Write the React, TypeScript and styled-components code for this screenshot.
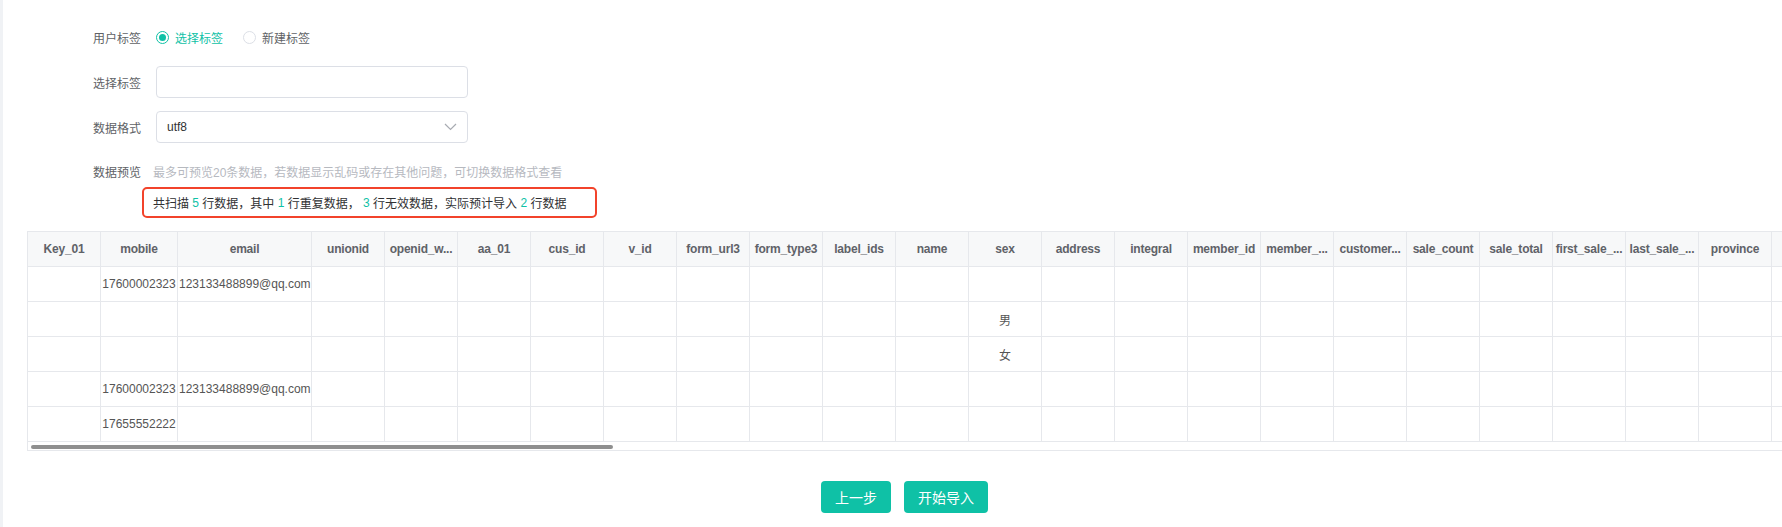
import React from 'react';
import styled, { createGlobalStyle } from 'styled-components';

const teal = '#0fc1a6';
const lineGrey = '#e6e8ec';
const textGrey = '#606266';

const GlobalStyle = createGlobalStyle`
  html, body {
    margin: 0;
    padding: 0;
    background: #fff;
  }
  body {
    font-family: "Liberation Sans", "Noto Sans CJK SC", sans-serif;
    font-size: 12px;
    color: ${textGrey};
  }
`;

// titles are shown already shortened, as the table header displays them
const columns: { key: string; title: string; width: number }[] = [
  { key: 'Key_01', title: 'Key_01', width: 73 },
  { key: 'mobile', title: 'mobile', width: 77 },
  { key: 'email', title: 'email', width: 134 },
  { key: 'unionid', title: 'unionid', width: 73 },
  { key: 'openid_wechat', title: 'openid_w...', width: 73 },
  { key: 'aa_01', title: 'aa_01', width: 73 },
  { key: 'cus_id', title: 'cus_id', width: 73 },
  { key: 'v_id', title: 'v_id', width: 73 },
  { key: 'form_url3', title: 'form_url3', width: 73 },
  { key: 'form_type3', title: 'form_type3', width: 73 },
  { key: 'label_ids', title: 'label_ids', width: 73 },
  { key: 'name', title: 'name', width: 73 },
  { key: 'sex', title: 'sex', width: 73 },
  { key: 'address', title: 'address', width: 73 },
  { key: 'integral', title: 'integral', width: 73 },
  { key: 'member_id', title: 'member_id', width: 73 },
  { key: 'member_level', title: 'member_...', width: 73 },
  { key: 'customer_type', title: 'customer...', width: 73 },
  { key: 'sale_count', title: 'sale_count', width: 73 },
  { key: 'sale_total', title: 'sale_total', width: 73 },
  { key: 'first_sale_time', title: 'first_sale_...', width: 73 },
  { key: 'last_sale_time', title: 'last_sale_...', width: 73 },
  { key: 'province', title: 'province', width: 73 },
  { key: 'city', title: '', width: 73 },
  { key: 'district', title: '', width: 73 },
];

const rows: Record<string, string>[] = [
  { mobile: '17600002323', email: '123133488899@qq.com' },
  { sex: '男' },
  { sex: '女' },
  { mobile: '17600002323', email: '123133488899@qq.com' },
  { mobile: '17655552222' },
];

export default function App() {
  const tableWidth = columns.reduce((sum, c) => sum + c.width, 0);

  return (
    <>
      <GlobalStyle />
      <Page>
        <SideStrip />
        <Main>
          <Form>
            <FormItem>
              <Label>用户标签</Label>
              <RadioGroup>
                <RadioOption $checked>
                  <RadioCircle $checked />
                  选择标签
                </RadioOption>
                <RadioOption>
                  <RadioCircle />
                  新建标签
                </RadioOption>
              </RadioGroup>
            </FormItem>
            <FormItem>
              <Label>选择标签</Label>
              <TextInput type="text" />
            </FormItem>
            <FormItem>
              <Label>数据格式</Label>
              <SelectBox>
                <span>utf8</span>
                <svg width="13" height="8" viewBox="0 0 13 8">
                  <path d="M1 1 L6.5 6.5 L12 1" fill="none" stroke="#a8abb2" strokeWidth="1.2" />
                </svg>
              </SelectBox>
            </FormItem>
            <FormItem $short>
              <Label>数据预览</Label>
              <Hint>最多可预览20条数据，若数据显示乱码或存在其他问题，可切换数据格式查看</Hint>
            </FormItem>
            <SummaryBox>
              共扫描 <Num>5</Num> 行数据，其中 <Num>1</Num> 行重复数据， <Num>3</Num> 行无效数据，实际预计导入{' '}
              <Num>2</Num> 行数据
            </SummaryBox>
          </Form>

          <TableWrap>
            <Table style={{ width: tableWidth }}>
              <colgroup>
                {columns.map((c) => (
                  <col key={c.key} style={{ width: c.width }} />
                ))}
              </colgroup>
              <thead>
                <tr>
                  {columns.map((c) => (
                    <HeadCell key={c.key}>{c.title}</HeadCell>
                  ))}
                </tr>
              </thead>
              <tbody>
                {rows.map((r, i) => (
                  <tr key={i}>
                    {columns.map((c) => (
                      <BodyCell key={c.key}>{r[c.key] ?? ''}</BodyCell>
                    ))}
                  </tr>
                ))}
              </tbody>
            </Table>
            <ScrollTrack>
              <ScrollThumb $width={582} />
            </ScrollTrack>
          </TableWrap>

          <Actions>
            <Button $width={70}>上一步</Button>
            <Button $width={84}>开始导入</Button>
          </Actions>
        </Main>
      </Page>
    </>
  );
}

const Page = styled.div`
  display: flex;
  width: 1782px;
  height: 527px;
  overflow: hidden;
`;

const SideStrip = styled.div`
  width: 3px;
  flex-shrink: 0;
  background: #f0f2f5;
`;

const Main = styled.div`
  flex: 1;
  min-width: 0;
  padding-left: 24px;
  overflow: hidden;
`;

const Form = styled.div`
  display: flex;
  flex-direction: column;
  padding: 21px 0 0 66px;
`;

const FormItem = styled.div<{ $short?: boolean }>`
  display: flex;
  align-items: center;
  height: ${(p) => (p.$short ? '30px' : '32px')};
  margin-bottom: ${(p) => (p.$short ? '1px' : '13px')};
`;

const Label = styled.label`
  width: 48px;
  margin-right: 15px;
  font-size: 12px;
  color: ${textGrey};
  white-space: nowrap;
`;

const RadioGroup = styled.div`
  display: flex;
  align-items: center;
  gap: 20px;
`;

const RadioOption = styled.span<{ $checked?: boolean }>`
  display: flex;
  align-items: center;
  gap: 6px;
  font-size: 12px;
  color: ${(p) => (p.$checked ? teal : textGrey)};
  cursor: pointer;
`;

const RadioCircle = styled.span<{ $checked?: boolean }>`
  position: relative;
  width: 13px;
  height: 13px;
  box-sizing: border-box;
  border-radius: 50%;
  border: 1px solid ${(p) => (p.$checked ? teal : '#dcdfe6')};
  background: #fff;

  &::after {
    content: '';
    display: ${(p) => (p.$checked ? 'block' : 'none')};
    position: absolute;
    left: 2px;
    top: 2px;
    width: 7px;
    height: 7px;
    border-radius: 50%;
    background: ${teal};
  }
`;

const TextInput = styled.input`
  width: 312px;
  height: 32px;
  box-sizing: border-box;
  border: 1px solid #dcdfe6;
  border-radius: 4px;
  padding: 0 10px;
  font-size: 12px;
  font-family: inherit;
  color: ${textGrey};

  &:focus {
    outline: none;
  }
`;

const SelectBox = styled.div`
  display: flex;
  align-items: center;
  justify-content: space-between;
  width: 312px;
  height: 32px;
  box-sizing: border-box;
  border: 1px solid #dcdfe6;
  border-radius: 4px;
  padding: 0 10px 0 10px;
  font-size: 12px;
  color: #303133;
`;

const Hint = styled.span`
  margin-left: -3px;
  font-size: 12px;
  color: #b6b9bf;
`;

const SummaryBox = styled.div`
  display: flex;
  align-items: center;
  white-space: pre;
  width: 455px;
  height: 31px;
  box-sizing: border-box;
  margin-left: 49px;
  padding-left: 9px;
  border: 2px solid #f2432b;
  border-radius: 5px;
  font-size: 12px;
  color: #303133;
`;

const Num = styled.span`
  color: ${teal};
`;

const TableWrap = styled.div`
  margin-top: 13px;
  border-left: 1px solid ${lineGrey};
  border-bottom: 1px solid ${lineGrey};
  overflow: hidden;
`;

const Table = styled.table`
  table-layout: fixed;
  border-collapse: separate;
  border-spacing: 0;
  border-top: 1px solid ${lineGrey};
`;

const HeadCell = styled.th`
  height: 35px;
  box-sizing: border-box;
  padding: 0 1px;
  background: #f7f8f9;
  border-right: 1px solid ${lineGrey};
  border-bottom: 1px solid ${lineGrey};
  font-size: 12px;
  font-weight: bold;
  letter-spacing: -0.2px;
  color: #5f6268;
  text-align: center;
  white-space: nowrap;
  overflow: hidden;
`;

const BodyCell = styled.td`
  height: 35px;
  box-sizing: border-box;
  padding: 0 1px;
  border-right: 1px solid ${lineGrey};
  border-bottom: 1px solid ${lineGrey};
  font-size: 12px;
  color: #555;
  text-align: center;
  white-space: nowrap;
  overflow: hidden;
`;

const ScrollTrack = styled.div`
  height: 8px;
  padding: 3px 0 0 3px;
  box-sizing: border-box;
`;

const ScrollThumb = styled.div<{ $width: number }>`
  width: ${(p) => p.$width}px;
  height: 4px;
  border-radius: 2px;
  background: #8f8f8f;
`;

const Actions = styled.div`
  display: flex;
  justify-content: center;
  gap: 13px;
  margin-top: 30px;
`;

const Button = styled.button<{ $width: number }>`
  width: ${(p) => p.$width}px;
  height: 32px;
  border: 0;
  border-radius: 4px;
  background: ${teal};
  color: #fff;
  font-size: 14px;
  font-family: inherit;
  cursor: pointer;

  &:focus {
    outline: none;
  }
`;
